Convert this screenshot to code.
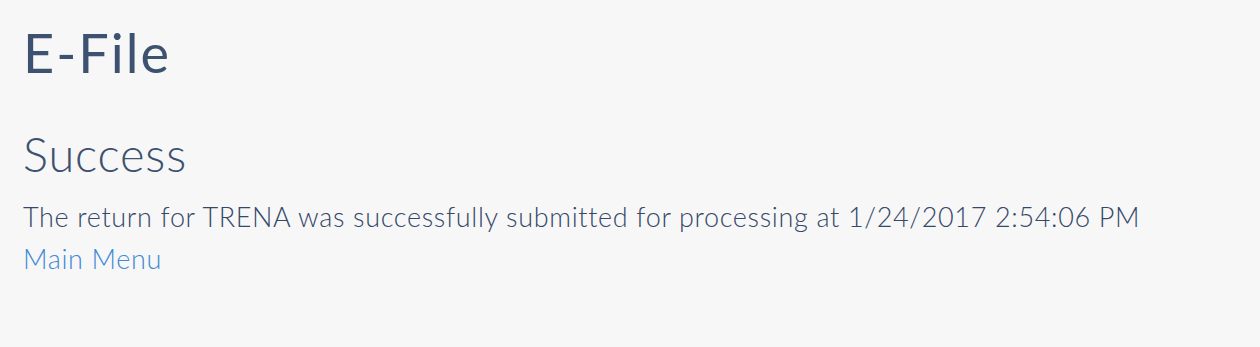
export default function App() {
  return (
    <div className="min-h-[347px] bg-[#f7f7f7] px-[23px] pt-[21px] font-['Lato','Noto_Sans',sans-serif] text-[#3d5170]">
      <h1 className="text-[54px] leading-[64px] font-normal tracking-[2px]">E-File</h1>
      <h2 className="mt-[41px] text-[47px] leading-[56px] font-light tracking-[0.8px]">Success</h2>
      <p className="mt-[14px] text-[27px] leading-[42px] font-light tracking-[0.66px] text-[#354868]">
        The return for TRENA was successfully submitted for processing at 1/24/2017 2:54:06 PM
      </p>
      <a href="#" className="block text-[27px] leading-[42px] font-light tracking-[0.66px] text-[#3f8ad6]">
        Main Menu
      </a>
    </div>
  )
}
